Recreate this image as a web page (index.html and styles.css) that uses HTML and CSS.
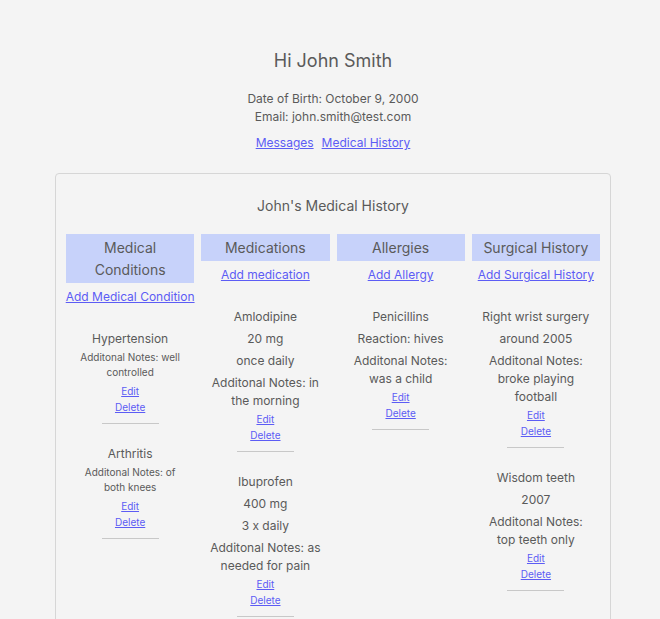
FILE: index.html
```html
<!DOCTYPE html>
<html lang="en">
<head>
<meta charset="utf-8">
<title>Patient</title>
<link rel="stylesheet" href="styles.css">
</head>
<body>
<div class="page">
  <h1 class="greeting">Hi John Smith</h1>
  <p class="info">Date of Birth: October 9, 2000</p>
  <p class="info">Email: john.smith@test.com</p>
  <nav class="nav">
    <a href="#">Messages</a>
    <a href="#">Medical History</a>
  </nav>

  <section class="card">
    <h2 class="card-title">John's Medical History</h2>
    <div class="columns">
      <div class="col col-small">
        <div class="col-head">Medical Conditions</div>
        <a class="add" href="#">Add Medical Condition</a>
        <div class="items">
          <div class="item">
            <p class="line">Hypertension</p>
            <p class="note">Additonal Notes: well controlled</p>
            <div class="links"><a href="#">Edit</a><a href="#">Delete</a></div>
            <div class="rule"></div>
          </div>
          <div class="item">
            <p class="line">Arthritis</p>
            <p class="note">Additonal Notes: of both knees</p>
            <div class="links"><a href="#">Edit</a><a href="#">Delete</a></div>
            <div class="rule"></div>
          </div>
        </div>
      </div>

      <div class="col">
        <div class="col-head">Medications</div>
        <a class="add" href="#">Add medication</a>
        <div class="items">
          <div class="item">
            <p class="line">Amlodipine</p>
            <p class="line">20 mg</p>
            <p class="line">once daily</p>
            <p class="line last">Additonal Notes: in the morning</p>
            <div class="links"><a href="#">Edit</a><a href="#">Delete</a></div>
            <div class="rule"></div>
          </div>
          <div class="item">
            <p class="line">Ibuprofen</p>
            <p class="line">400 mg</p>
            <p class="line">3 x daily</p>
            <p class="line last">Additonal Notes: as needed for pain</p>
            <div class="links"><a href="#">Edit</a><a href="#">Delete</a></div>
            <div class="rule"></div>
          </div>
        </div>
      </div>

      <div class="col">
        <div class="col-head">Allergies</div>
        <a class="add" href="#">Add Allergy</a>
        <div class="items">
          <div class="item">
            <p class="line">Penicillins</p>
            <p class="line">Reaction: hives</p>
            <p class="line last">Additonal Notes: was a child</p>
            <div class="links"><a href="#">Edit</a><a href="#">Delete</a></div>
            <div class="rule"></div>
          </div>
        </div>
      </div>

      <div class="col">
        <div class="col-head">Surgical History</div>
        <a class="add" href="#">Add Surgical History</a>
        <div class="items">
          <div class="item">
            <p class="line">Right wrist surgery</p>
            <p class="line">around 2005</p>
            <p class="line last">Additonal Notes: broke playing football</p>
            <div class="links"><a href="#">Edit</a><a href="#">Delete</a></div>
            <div class="rule"></div>
          </div>
          <div class="item">
            <p class="line">Wisdom teeth</p>
            <p class="line">2007</p>
            <p class="line last">Additonal Notes: top teeth only</p>
            <div class="links"><a href="#">Edit</a><a href="#">Delete</a></div>
            <div class="rule"></div>
          </div>
        </div>
      </div>
    </div>
  </section>
</div>
</body>
</html>
```

FILE: styles.css
```css
html, body {
  margin: 0;
  padding: 0;
  background: #f4f4f4;
}

body {
  font-family: Inter, "Noto Sans", sans-serif;
  color: #5a5a5a;
}

a {
  color: #5c5cf5;
  text-decoration: underline;
}

.page {
  margin: 0 49px 0 55px;
  padding-top: 49px;
  text-align: center;
}

.greeting {
  margin: 0 0 17px;
  font-size: 18px;
  line-height: 24px;
  font-weight: 400;
  color: #5a5a5a;
}

.info {
  margin: 0;
  font-size: 12px;
  line-height: 18px;
}

.nav {
  margin-top: 8px;
  display: flex;
  justify-content: center;
  gap: 8px;
  font-size: 12px;
  line-height: 18px;
}

.card {
  margin-top: 21px;
  border: 1px solid #d6d6d6;
  border-radius: 4px;
  padding: 22px 10px 40px;
}

.card-title {
  margin: 0 0 18px;
  font-size: 14px;
  line-height: 20px;
  font-weight: 400;
  color: #5a5a5a;
}

.columns {
  display: grid;
  grid-template-columns: repeat(4, 1fr);
  column-gap: 7px;
  align-items: start;
}

.col {
  display: flex;
  flex-direction: column;
  align-items: center;
  min-width: 0;
}

.col-head {
  align-self: stretch;
  background: #c7d2fa;
  font-size: 14px;
  line-height: 22px;
  padding: 3px 4px 2px;
  color: #5a5a5a;
}

.add {
  margin-top: 5px;
  font-size: 12px;
  line-height: 18px;
  white-space: nowrap;
}

.items {
  margin-top: 24px;
  align-self: stretch;
}

.item {
  padding: 0 8px;
}

.line {
  margin: 0 0 4px;
  font-size: 12px;
  line-height: 18px;
}

.line.last {
  margin-bottom: 1px;
}

.col-small .line {
  margin-bottom: 2px;
}

.note {
  margin: 0 0 3px;
  font-size: 10px;
  line-height: 15px;
}

.links {
  display: flex;
  flex-direction: column;
  align-items: center;
  font-size: 10px;
  line-height: 16px;
}

.rule {
  width: 57px;
  height: 1px;
  background: #c8c8c8;
  margin: 8px auto 21px;
}
```
